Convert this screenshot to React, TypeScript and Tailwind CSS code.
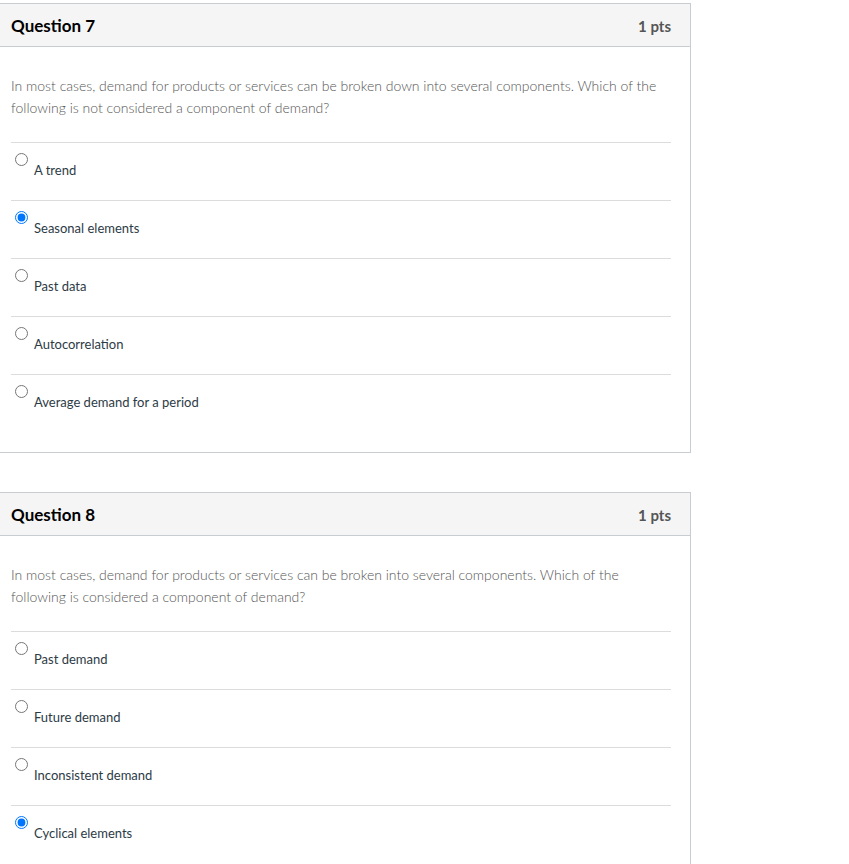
import React from "react";

type Q = { title: string; text: string; answers: string[]; selected: number };

const questions: Q[] = [
  {
    title: "Question 7",
    text: "In most cases, demand for products or services can be broken down into several components. Which of the following is not considered a component of demand?",
    answers: ["A trend", "Seasonal elements", "Past data", "Autocorrelation", "Average demand for a period"],
    selected: 1,
  },
  {
    title: "Question 8",
    text: "In most cases, demand for products or services can be broken into several components. Which of the following is considered a component of demand?",
    answers: ["Past demand", "Future demand", "Inconsistent demand", "Cyclical elements"],
    selected: 3,
  },
];

function Card({ q, idx }: { q: Q; idx: number }) {
  return (
    <div className="w-[691px] border-y border-r border-[#c7cdd1] bg-white">
      <div className="h-[43px] bg-[#f5f5f5] border-b border-[#c7cdd1] flex items-center justify-between pl-[11px] pr-[19px] pt-[2px]">
        <span className="text-[17px] font-bold text-black">{q.title}</span>
        <span className="text-[15px] font-bold text-[#555]">1 pts</span>
      </div>
      <div className="pl-[11px] pr-[19px] pt-[28px] pb-[20px]">
        <p className="text-[14px] leading-[22px] text-[#555] font-light">{q.text}</p>
        <div className="mt-[23px]">
          {q.answers.map((a, i) => (
            <div key={a} className="h-[58px] border-t border-[#dcdcdc] flex items-start">
              <input
                type="radio"
                name={"q" + idx}
                checked={i === q.selected}
                readOnly
                className="m-0 mt-[10px] ml-[4px] mr-[6px] w-[13px] h-[13px] shrink-0"
              />
              <span className="mt-[18px] text-[13px] leading-[18px] text-[#2d3b45]">{a}</span>
            </div>
          ))}
        </div>
      </div>
    </div>
  );
}

export default function App() {
  return (
    <div className="pt-[3px] bg-white min-h-screen" style={{ fontFamily: "Lato, 'Liberation Sans', sans-serif" }}>
      <Card q={questions[0]} idx={0} />
      <div className="mt-[39px]">
        <Card q={questions[1]} idx={1} />
      </div>
    </div>
  );
}
